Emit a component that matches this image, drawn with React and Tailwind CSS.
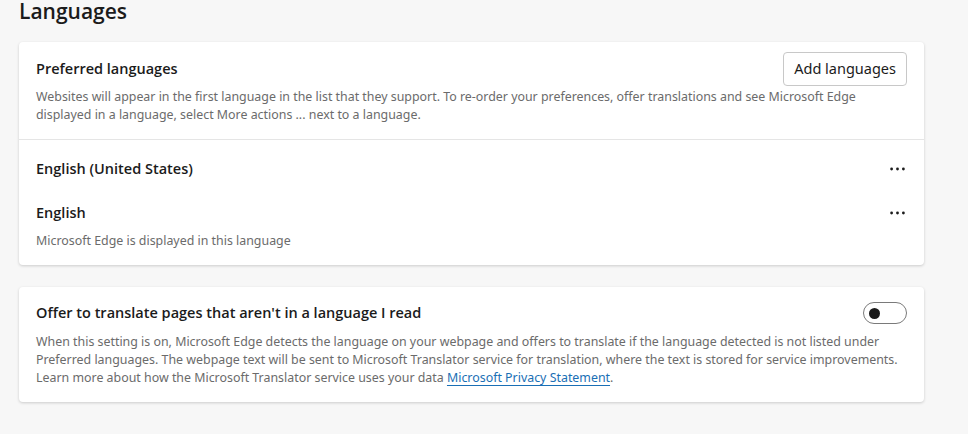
import React from "react";

const font = { fontFamily: '"Segoe UI", "Noto Sans", sans-serif' };
const heading = { fontFamily: '"Segoe UI", "Open Sans", "Noto Sans", sans-serif' };

const Dots = () => (
  <button className="w-5 h-5 flex items-center justify-center">
    <svg width="15" height="4" viewBox="0 0 15 4">
      <circle cx="1.6" cy="2" r="1.4" fill="#1b1b1b" />
      <circle cx="7.5" cy="2" r="1.4" fill="#1b1b1b" />
      <circle cx="13.4" cy="2" r="1.4" fill="#1b1b1b" />
    </svg>
  </button>
);

const LanguageRow = ({ name, note }) => (
  <div className="flex items-start justify-between px-[17px]">
    <div>
      <p className="text-[14.5px] font-semibold text-[#1b1b1b] leading-[20px]" style={heading}>{name}</p>
      {note && <p className="text-[12.4px] text-[#6b6b6b] mt-[9px] leading-[18px]">{note}</p>}
    </div>
    <Dots />
  </div>
);

export default function App() {
  return (
    <div className="min-h-[434px] bg-[#f7f7f7] pl-[19px] pr-[44px]" style={font}>
      <h1 className="text-[21px] font-semibold text-[#1b1b1b] leading-[22px]" style={heading}>Languages</h1>

      <div className="mt-[20px] bg-white rounded-[4px] shadow-[0_1px_3px_rgba(0,0,0,0.18)] pb-[15px]">
        <div className="px-[17px] pt-[10px] pb-[15px] border-b border-[#e5e5e5]">
          <div className="flex items-center justify-between">
            <p className="text-[14.5px] font-semibold text-[#1b1b1b] leading-[20px]" style={heading}>Preferred languages</p>
            <button className="h-[34px] px-[10px] border border-[#c8c8c8] rounded-[4px] text-[14.5px] text-[#1b1b1b] bg-white">
              Add languages
            </button>
          </div>
          <p className="text-[12.4px] text-[#6b6b6b] leading-[18px] mt-[2px] max-w-[836px]">
            Websites will appear in the first language in the list that they support. To re-order your preferences, offer translations and see Microsoft Edge displayed in a language, select More actions ... next to a language.
          </p>
        </div>
        <div className="pt-[19px] flex flex-col gap-[24px]">
          <LanguageRow name="English (United States)" />
          <LanguageRow name="English" note="Microsoft Edge is displayed in this language" />
        </div>
      </div>

      <div className="mt-[22px] bg-white rounded-[4px] shadow-[0_1px_3px_rgba(0,0,0,0.18)] px-[17px] pt-[15px] pb-[15px]">
        <div className="flex justify-between items-center h-[22px]">
          <p className="text-[14.5px] font-semibold text-[#1b1b1b] leading-[20px]" style={heading}>Offer to translate pages that aren't in a language I read</p>
          <div className="w-[44px] h-[22px] rounded-full border border-[#7a7a7a] flex items-center pl-[5px]">
            <div className="w-[11px] h-[11px] rounded-full bg-[#1b1b1b]"></div>
          </div>
        </div>
        <p className="text-[12.4px] text-[#6b6b6b] leading-[18px] mt-[9px]">
          When this setting is on, Microsoft Edge detects the language on your webpage and offers to translate if the language detected is not listed under Preferred languages. The webpage text will be sent to Microsoft Translator service for translation, where the text is stored for service improvements. Learn more about how the Microsoft Translator service uses your data{" "}
          <a href="#" className="text-[#1a6fb5] underline underline-offset-[3px]">Microsoft Privacy Statement</a>.
        </p>
      </div>
    </div>
  );
}
